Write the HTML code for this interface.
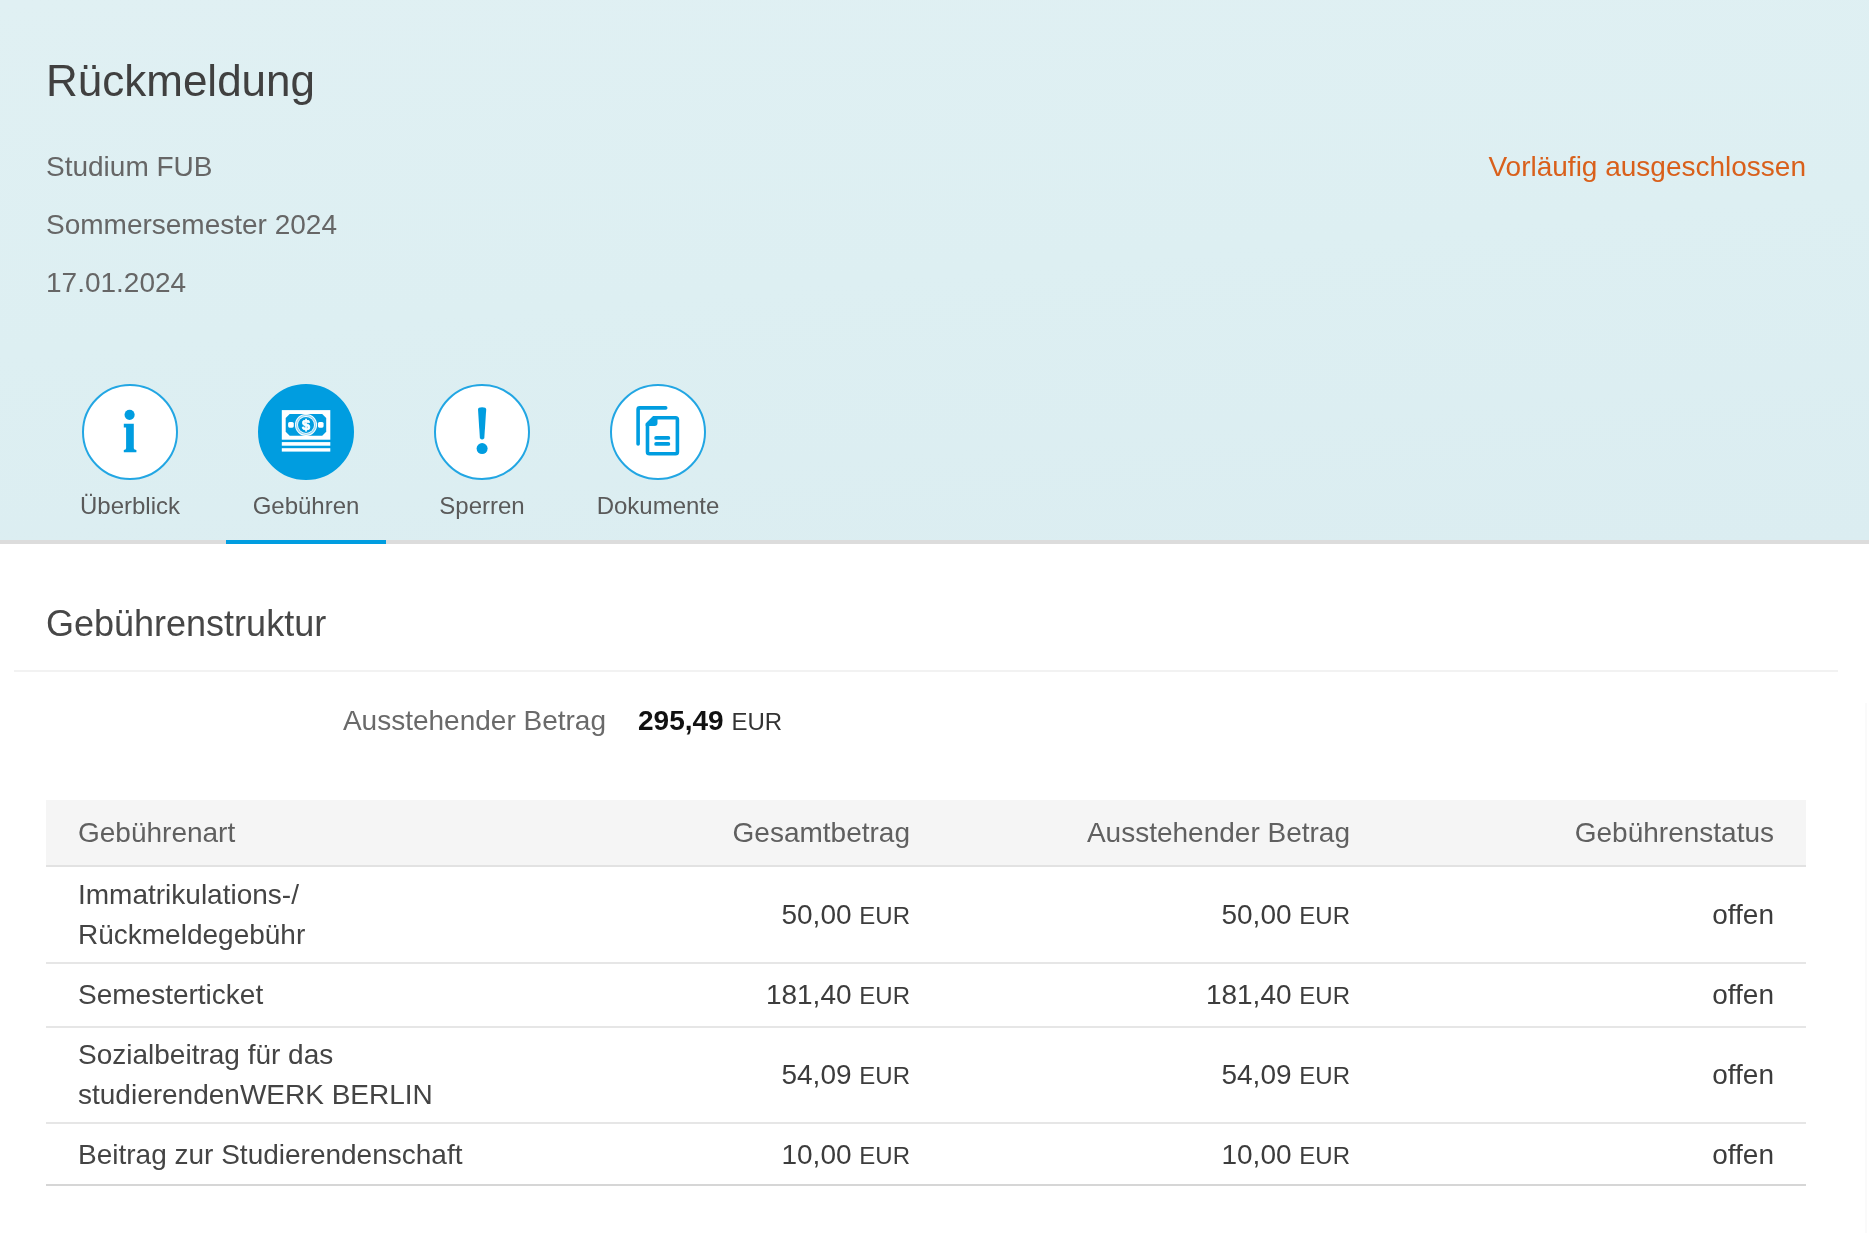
<!DOCTYPE html>
<html><head><meta charset="utf-8">
<style>
html,body{margin:0;padding:0;}
body{will-change:transform;width:1869px;height:1233px;position:relative;overflow:hidden;background:#ffffff;font-family:"Liberation Sans",sans-serif;}
.a{position:absolute;white-space:nowrap;}
#hdr{position:absolute;left:0;top:0;width:1869px;height:544px;background:linear-gradient(175deg,#e0f0f3 0%,#ddeff2 50%,#dbedf1 100%);}
#hline{position:absolute;left:0;top:540px;width:1869px;height:4px;background:#dcdcdc;}
#tabul{position:absolute;left:226px;top:540px;width:160px;height:4px;background:#009de0;}
.t28{font-size:28px;line-height:40px;}
.t24{font-size:24px;line-height:32px;}
.circ{position:absolute;top:384px;width:92px;height:92px;border:2px solid #22a6e3;border-radius:50%;background:#fff;}
.lbl{position:absolute;top:490px;width:176px;text-align:center;font-size:24px;line-height:32px;color:#5a5a5a;}
.hl{position:absolute;left:46px;width:1760px;height:2px;background:#e6e6e6;}
.c1{left:78px;color:#444;}
.r{text-align:right;}
.num{color:#3c3c3c;}
.eur{font-size:24px;}
</style></head>
<body>
<div id="hdr"></div>
<div id="hline"></div>
<div id="tabul"></div>

<!-- header texts -->
<div class="a" style="left:46px;top:52.75px;font-size:44px;line-height:56px;color:#404040;">Rückmeldung</div>
<div class="a t28" style="left:46px;top:147px;color:#666;">Studium FUB</div>
<div class="a t28" style="left:46px;top:205px;color:#666;">Sommersemester 2024</div>
<div class="a t28" style="left:46px;top:263px;color:#666;">17.01.2024</div>
<div class="a t28" style="right:63px;top:147px;color:#d9601b;">Vorläufig ausgeschlossen</div>

<!-- tabs -->
<div class="circ" style="left:82px;"></div>
<div class="circ" style="left:258px;background:#009de0;border-color:#009de0;"></div>
<div class="circ" style="left:434px;"></div>
<div class="circ" style="left:610px;"></div>

<svg class="a" style="left:0;top:0;" width="800" height="540" viewBox="0 0 800 540">
  <!-- info i -->
  <g fill="#009de0">
    <circle cx="129.6" cy="414.8" r="5.1"/>
    <path d="M123.8 423.8 L133.8 423.8 L133.8 448.2 Q134 449.6 136.4 450 L136.4 452.2 L123.8 452.2 L123.8 450 Q126 449.6 126.1 448.2 L126.1 427.6 L123.8 427.6 Z"/>
  </g>
  <!-- money -->
  <rect x="281.8" y="410.1" width="48.5" height="29.6" fill="#fff"/>
  <path d="M289.7 414.1 H322.2 L326.2 418.1 V431.8 L322.2 435.8 H289.7 L285.7 431.8 V418.1 Z" fill="#009de0"/>
  <circle cx="306" cy="424.9" r="11" fill="#fff"/>
  <circle cx="306" cy="424.9" r="9.5" fill="none" stroke="#9ad6f1" stroke-width="1.4"/>
  <circle cx="306" cy="424.9" r="8" fill="#009de0"/>
  <rect x="288.1" y="422" width="5.7" height="5.7" rx="1.6" fill="#fff"/>
  <rect x="317.9" y="422" width="5.7" height="5.7" rx="1.6" fill="#fff"/>
  <rect x="281.8" y="442.1" width="48.5" height="3.6" fill="#fff"/>
  <rect x="281.8" y="448.2" width="48.5" height="3.4" fill="#fff"/>
  <text x="306.1" y="430.2" font-family="Liberation Sans" font-weight="bold" font-size="14.5" fill="#fff" stroke="#fff" stroke-width="0.7" text-anchor="middle">$</text>
  <!-- exclamation -->
  <g fill="#009de0">
    <path d="M478 409.6 Q478 407.2 482.1 407.2 Q486.2 407.2 486.2 409.6 L484.3 438.3 Q482.1 440.8 479.9 438.3 Z"/>
    <circle cx="482.1" cy="448.6" r="5.5"/>
  </g>
  <!-- documents -->
  <g fill="none" stroke="#009de0" stroke-width="3.6">
    <path d="M638.1 444 V409.5 Q638.1 407.9 639.7 407.9 H665.7" stroke-linecap="round"/>
    <path d="M654 417.7 H675.5 Q677.4 417.7 677.4 419.6 V452 Q677.4 453.8 675.5 453.8 H649.5 Q647.5 453.8 647.5 452 V424.5 Z"/>
  </g>
  <path d="M645.7 423.5 L653.3 415.9 L657.5 415.9 L657.5 423 Q657.5 426 654.5 426 L645.7 426 Z" fill="#009de0"/>
  <path d="M656.1 437.9 H668.4 M656.1 443.9 H668.4" stroke="#009de0" stroke-width="3.7" stroke-linecap="round"/>
</svg>

<div class="lbl" style="left:42px;">Überblick</div>
<div class="lbl" style="left:218px;">Gebühren</div>
<div class="lbl" style="left:394px;">Sperren</div>
<div class="lbl" style="left:570px;">Dokumente</div>

<!-- section -->
<div class="a" style="left:46px;top:599.5px;font-size:36px;line-height:48px;color:#474747;">Gebührenstruktur</div>
<div class="a" style="left:14px;top:670px;width:1824px;height:2px;background:#f2f2f2;"></div>

<div class="a t28" style="left:0;width:606px;text-align:right;top:701px;color:#6a6a6a;">Ausstehender Betrag</div>
<div class="a t28" style="left:638px;top:701px;color:#111;"><b>295,49</b> <span class="eur" style="color:#333;">EUR</span></div>

<!-- table -->
<div class="a" style="left:46px;top:800px;width:1760px;height:65px;background:#f5f5f5;"></div>
<div class="hl" style="top:865px;background:#e2e2e2;"></div>
<div class="hl" style="top:962px;"></div>
<div class="hl" style="top:1026px;"></div>
<div class="hl" style="top:1122px;"></div>
<div class="hl" style="top:1184px;background:#d6d6d6;"></div>

<div class="a t28" style="left:78px;top:813px;color:#606060;">Gebührenart</div>
<div class="a t28 r" style="left:500px;width:410px;top:813px;color:#606060;">Gesamtbetrag</div>
<div class="a t28 r" style="left:940px;width:410px;top:813px;color:#606060;">Ausstehender Betrag</div>
<div class="a t28 r" style="left:1364px;width:410px;top:813px;color:#606060;">Gebührenstatus</div>

<div class="a t28 c1" style="top:875px;">Immatrikulations-/<br>Rückmeldegebühr</div>
<div class="a t28 r num" style="left:500px;width:410px;top:894.5px;">50,00 <span class="eur">EUR</span></div>
<div class="a t28 r num" style="left:940px;width:410px;top:894.5px;">50,00 <span class="eur">EUR</span></div>
<div class="a t28 r num" style="left:1364px;width:410px;top:894.5px;">offen</div>

<div class="a t28 c1" style="top:975px;">Semesterticket</div>
<div class="a t28 r num" style="left:500px;width:410px;top:975px;">181,40 <span class="eur">EUR</span></div>
<div class="a t28 r num" style="left:940px;width:410px;top:975px;">181,40 <span class="eur">EUR</span></div>
<div class="a t28 r num" style="left:1364px;width:410px;top:975px;">offen</div>

<div class="a t28 c1" style="top:1035px;">Sozialbeitrag für das<br>studierendenWERK BERLIN</div>
<div class="a t28 r num" style="left:500px;width:410px;top:1055px;">54,09 <span class="eur">EUR</span></div>
<div class="a t28 r num" style="left:940px;width:410px;top:1055px;">54,09 <span class="eur">EUR</span></div>
<div class="a t28 r num" style="left:1364px;width:410px;top:1055px;">offen</div>

<div class="a t28 c1" style="top:1135px;">Beitrag zur Studierendenschaft</div>
<div class="a t28 r num" style="left:500px;width:410px;top:1135px;">10,00 <span class="eur">EUR</span></div>
<div class="a t28 r num" style="left:940px;width:410px;top:1135px;">10,00 <span class="eur">EUR</span></div>
<div class="a t28 r num" style="left:1364px;width:410px;top:1135px;">offen</div>

<div class="a" style="left:1865px;top:703px;width:2px;height:530px;background:#fafafa;"></div>
</body></html>
